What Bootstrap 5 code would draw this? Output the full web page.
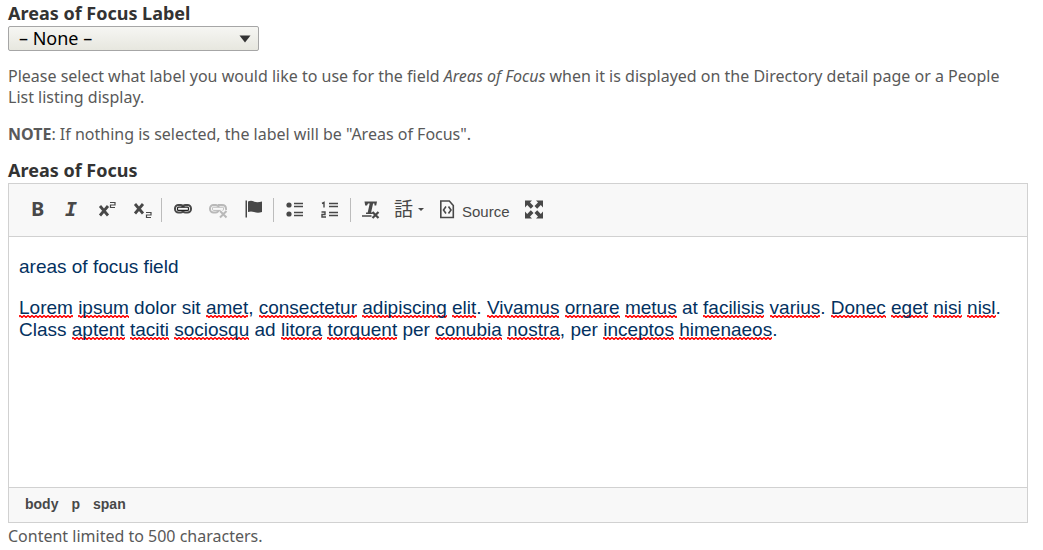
<!DOCTYPE html>
<html lang="en">
<head>
<meta charset="utf-8">
<meta name="viewport" content="width=device-width, initial-scale=1">
<title>Areas of Focus</title>
<link href="https://cdn.jsdelivr.net/npm/bootstrap@5.3.0/dist/css/bootstrap.min.css" rel="stylesheet">
<style>
body { font-family: "Noto Sans", sans-serif; font-size: 16px; line-height: 21px; color: #595959; background: #fff; }
.form-area { margin-right: 7px; }
.field-label { display: block; padding-bottom: 4px; font-weight: 700; font-size: 18px; line-height: 18px; color: #333; }
.label-select { appearance: none; width: 251px; height: 25px; padding: 0 10px; border: 1px solid #a6a6a6; border-radius: 2px; color: #000; font-size: 18px; line-height: 21px;
  background: url("data:image/svg+xml,%3Csvg xmlns='http://www.w3.org/2000/svg' width='12' height='8'%3E%3Cpath d='M.5.5h11L6 7.5z' fill='%23333'/%3E%3C/svg%3E") no-repeat right 7px center, linear-gradient(#f6f6f3, #e7e7df); }
.help-text { padding-top: 15px; }
.help-text p { margin-bottom: 16px; }
.editor { border: 1px solid #d1d1d1; }
.tools { background: #f8f8f8; border-bottom: 1px solid #d1d1d1; padding: 9px; min-height: 53px; }
.tool { border: 0; background: none; padding: 0; height: 34px; color: #484848; display: flex; align-items: center; font: 15px/24px "Liberation Sans", sans-serif; }
.tool svg { display: block; fill: currentColor; overflow: visible; }
.tool:disabled { color: #b9b9b9; }
.divider { width: 1px; height: 24px; margin: 0 3px; background: #bcbcbc; }
.content-area { min-height: 250px; padding: 19px 10px; color: #03315f; font: 19px/22px "Liberation Sans", sans-serif; outline: 0; }
.content-area p { margin-bottom: 19px; }
.typo { background: url("data:image/svg+xml,%3Csvg xmlns='http://www.w3.org/2000/svg' width='4' height='3'%3E%3Cpath d='M-1 2.5L1 .5 3 2.5 5 .5' fill='none' stroke='red' stroke-width='1.4'/%3E%3C/svg%3E") repeat-x left bottom; }
.path-bar { background: #f8f8f8; border-top: 1px solid #d1d1d1; padding: 5px 16px 7px; gap: 13px; font: 700 14px/22px "Liberation Sans", sans-serif; }
.path-bar a { color: #484848; text-decoration: none; }
.limit-note { padding-top: 3px; }
</style>
</head>
<body>
<main class="px-2 pt-1">
  <div class="form-area">
  <label class="field-label" for="focus-label">Areas of Focus Label</label>
  <select class="label-select d-block" id="focus-label"><option>– None –</option></select>
  <div class="help-text">
    <p>Please select what label you would like to use for the field <em>Areas of Focus</em> when it is displayed on the Directory detail page or a People List listing display.</p>
    <p><strong>NOTE</strong>: If nothing is selected, the label will be "Areas of Focus".</p>
  </div>
  <div class="field-label" id="focus-title">Areas of Focus</div>
  <div class="editor">
    <div class="tools d-flex flex-wrap align-items-center" role="toolbar" aria-label="Formatting">
      <button class="tool" type="button" aria-label="Bold"><svg width="35" height="24"><text x="13" y="18" font-family="Noto Sans" font-weight="700" font-size="20">B</text></svg></button>
      <button class="tool" type="button" aria-label="Italic"><svg width="35" height="24"><text x="12" y="18" font-family="DejaVu Sans Mono" font-style="italic" font-weight="700" font-size="20">I</text></svg></button>
      <button class="tool" type="button" aria-label="Superscript"><svg width="35" height="24"><path d="M12 8l8 9.500M20 8l-8 9.500" stroke="currentColor" stroke-width="2.800"/><path d="M22 4.500h5v2.500h-4.500v2.500H27" fill="none" stroke="currentColor" stroke-width="1.200"/></svg></button>
      <button class="tool" type="button" aria-label="Subscript"><svg width="35" height="24"><path d="M12 6l8 9.500M20 6l-8 9.500" stroke="currentColor" stroke-width="2.800"/><path d="M23 14.500h5v2.500h-4.500v2.500H28" fill="none" stroke="currentColor" stroke-width="1.200"/></svg></button>
      <span class="divider"></span>
      <button class="tool" type="button" aria-label="Link"><svg width="35" height="24"><g fill="none" stroke="currentColor" stroke-width="2"><rect x="10" y="7" width="9" height="7.500" rx="3.500"/><rect x="17" y="7" width="9" height="7.500" rx="3.500"/></g><rect x="12.500" y="9.200" width="11" height="3.200" rx="1" fill="#f8f8f8" stroke="#222" stroke-width="1.200"/></svg></button>
      <button class="tool" type="button" aria-label="Unlink" disabled><svg width="35" height="24"><g fill="none" stroke="currentColor" stroke-width="2"><rect x="10" y="7" width="9" height="7.500" rx="3.500"/><path d="M18 7h4q4 0 4 4v1"/></g><rect x="12.500" y="9.200" width="11" height="3.200" rx="1" fill="#f8f8f8" stroke="currentColor"/><path d="M20 13l6.500 6.500M26.500 13L20 19.500" stroke="#f8f8f8" stroke-width="4"/><path d="M20 13l6.500 6.500M26.500 13L20 19.500" stroke="currentColor" stroke-width="2"/></svg></button>
      <button class="tool" type="button" aria-label="Anchor"><svg width="35" height="24"><path d="M10.500 2.500h1.500v17h-1.500zM13 3.500q3-1.500 6 0 3 1.500 8 0v10.500q-4 1.500-8 0-3-1-6 0z"/></svg></button>
      <span class="divider"></span>
      <button class="tool" type="button" aria-label="Bulleted list"><svg width="35" height="24"><circle cx="12" cy="7" r="2.600"/><circle cx="12" cy="16" r="2.600"/><path d="M17 5.500h9M17 8.500h9M17 14.500h9M17 17.500h9" stroke="currentColor" stroke-width="1.400"/></svg></button>
      <button class="tool" type="button" aria-label="Numbered list"><svg width="35" height="24"><path d="M10 5.500l2-1v5M9.500 14h3.500v2.500h-3V19h4" fill="none" stroke="currentColor" stroke-width="1.400"/><path d="M17 5.500h9M17 8.500h9M17 14.500h9M17 17.500h9" stroke="currentColor" stroke-width="1.400"/></svg></button>
      <span class="divider"></span>
      <button class="tool" type="button" aria-label="Remove format"><svg width="35" height="24"><path d="M10.500 3.500h12.500l-.8 4h-1.700l-.1-2h-1.300l-2 9h1.600v1.500h-6.700v-1.500h1.700l2-9H14l-1 2h-1.800zM8 17.200h9.500v1.500H8z"/><path d="M18.500 14l6 6M24.500 14l-6 6" stroke="currentColor" stroke-width="2.200"/></svg></button>
      <button class="tool" type="button" aria-label="Set language"><svg width="41" height="24"><text x="5" y="18" font-family="Noto Sans CJK JP" font-size="19">話</text><path d="M29 10h6l-3 3z"/></svg></button>
      <button class="tool" type="button"><svg width="32" height="24" aria-hidden="true"><path d="M10.800 3h8.500l4 4.500V19.500H10.800z" fill="none" stroke="currentColor" stroke-width="1.600"/><path d="M16 8.500L13.500 12l2.500 3.500M18.500 8.500L21 12l-2.500 3.500" fill="none" stroke="currentColor" stroke-width="1.600"/></svg><span class="pt-1">Source</span></button>
      <button class="tool" type="button" aria-label="Maximize"><svg width="50" height="24"><path id="arrow" d="M15 2.500h7L20 4.500l3.500 3.500-2.700 2.700L17.200 7 15 9.500z"/><use href="#arrow" transform="matrix(-1 0 0 1 48 0)"/><use href="#arrow" transform="matrix(1 0 0 -1 0 23)"/><use href="#arrow" transform="matrix(-1 0 0 -1 48 23)"/></svg></button>
    </div>
    <div class="content-area" contenteditable="true" spellcheck="false" role="textbox" aria-multiline="true" aria-labelledby="focus-title">
      <p>areas of focus field</p>
      <p class="mb-0"><span class="typo">Lorem</span> <span class="typo">ipsum</span> dolor sit <span class="typo">amet</span>, <span class="typo">consectetur</span> <span class="typo">adipiscing</span> <span class="typo">elit</span>. <span class="typo">Vivamus</span> <span class="typo">ornare</span> <span class="typo">metus</span> at <span class="typo">facilisis</span> <span class="typo">varius</span>. <span class="typo">Donec</span> <span class="typo">eget</span> <span class="typo">nisi</span> <span class="typo">nisl</span>. Class <span class="typo">aptent</span> <span class="typo">taciti</span> <span class="typo">sociosqu</span> ad <span class="typo">litora</span> <span class="typo">torquent</span> per <span class="typo">conubia</span> <span class="typo">nostra</span>, per <span class="typo">inceptos</span> <span class="typo">himenaeos</span>.</p>
    </div>
    <nav class="path-bar d-flex" aria-label="Elements path"><a href="#">body</a><a href="#">p</a><a href="#">span</a></nav>
  </div>
  <div class="limit-note">Content limited to 500 characters.</div>
  </div>
</main>
<script src="https://cdn.jsdelivr.net/npm/bootstrap@5.3.0/dist/js/bootstrap.bundle.min.js"></script>
</body>
</html>
